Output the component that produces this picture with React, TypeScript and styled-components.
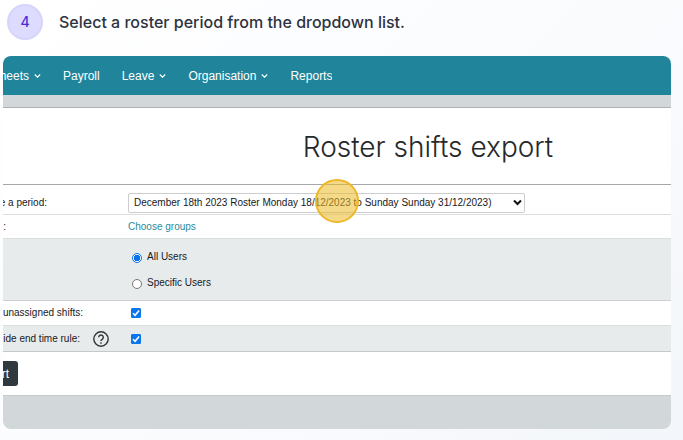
import React, { useState } from "react";
import styled, { createGlobalStyle } from "styled-components";

const Global = createGlobalStyle`
  * { box-sizing: border-box; }
  html { min-height: 100%; background: linear-gradient(135deg, #ffffff 0%, #fbfcfe 50%, #f3f6fa 100%); }
  body { margin: 0; font-family: "Liberation Sans", Arial, sans-serif; color: #17191c; }
`;

const Page = styled.main`
  padding: 4px 12px 11px 3px;
`;

const StepHeader = styled.header`
  display: flex;
  align-items: center;
  gap: 16px;
  height: 36px;
  margin: 0 0 16px 4px;
`;

const StepNumber = styled.span`
  display: grid;
  place-items: center;
  flex: none;
  width: 36px;
  height: 36px;
  border: 2px solid #d6d4fb;
  border-radius: 50%;
  background: #dddcfe;
  color: #4b2bd8;
  font: 500 14px/20px Inter, sans-serif;
`;

const StepTitle = styled.h1`
  margin: 0;
  color: #2d3340;
  font: 500 16px/24px Inter, sans-serif;
  white-space: nowrap;
`;

const Card = styled.section`
  overflow: hidden;
  border-radius: 8px;
  background: #ffffff;
`;

const Nav = styled.nav`
  display: flex;
  align-items: center;
  gap: 22px;
  height: 39px;
  background: #20859b;
`;

const NavLink = styled.a<{ $clipped?: boolean }>`
  display: flex;
  align-items: center;
  justify-content: flex-end;
  flex: none;
  gap: 5px;
  width: ${(p) => (p.$clipped ? "38px" : "auto")};
  overflow: hidden;
  color: #ffffff;
  font-size: 12px;
  line-height: 16px;
  text-decoration: none;
  white-space: nowrap;
  & > svg { flex: none; }
`;

const Strip = styled.div`
  height: 13px;
  border-bottom: 1px solid #adb1b3;
  background: #d2d8da;
`;

const Title = styled.h2`
  margin: 0;
  padding: 21px 0 19px 182px;
  border-bottom: 1px solid #a5a8aa;
  color: #26292c;
  font: 300 28px/36px Inter, sans-serif;
  text-align: center;
  white-space: nowrap;
`;

const Row = styled.div<{ $height: number; $shaded?: boolean; $line?: string }>`
  display: grid;
  grid-template-columns: 125px 1fr;
  align-items: center;
  height: ${(p) => p.$height}px;
  border-bottom: 1px solid ${(p) => p.$line ?? "#dcdfe0"};
  background: ${(p) => (p.$shaded ? "#e7ebec" : "#ffffff")};
  font-size: 10px;
  line-height: 16px;
`;

const LabelCell = styled.div<{ $low?: boolean }>`
  display: flex;
  align-items: center;
  gap: 13px;
  padding-top: ${(p) => (p.$low ? "6px" : "0")};
`;

const Label = styled.label<{ $visible: number }>`
  display: flex;
  justify-content: flex-end;
  width: ${(p) => p.$visible}px;
  overflow: hidden;
  white-space: nowrap;
`;

const HelpButton = styled.button`
  display: grid;
  padding: 0;
  border: 0;
  background: none;
  color: #303539;
`;

const SelectBox = styled.div`
  position: relative;
  display: flex;
  align-items: center;
  width: 397px;
  max-width: 100%;
  margin-top: 6px;
`;

const Select = styled.select`
  appearance: none;
  width: 100%;
  height: 20px;
  padding: 0 16px 0 5px;
  border: 1px solid #cbcdce;
  border-radius: 2px;
  background: #ffffff;
  color: #17191c;
  font: 10px/16px "Liberation Sans", Arial, sans-serif;
`;

const SelectArrow = styled.svg`
  position: absolute;
  right: 3px;
  pointer-events: none;
`;

const ClickMarker = styled.span`
  position: absolute;
  left: 187px;
  top: -14px;
  width: 44px;
  height: 44px;
  border: 2px solid #edb728;
  border-radius: 50%;
  background: rgba(235, 185, 40, 0.55);
  pointer-events: none;
`;

const GroupLink = styled.a`
  color: #2a8a9b;
  font-size: 10px;
  text-decoration: none;
`;

const Options = styled.div`
  display: grid;
  gap: 10px;
`;

const Option = styled.label`
  display: flex;
  align-items: center;
  gap: 5px;
  padding-left: 4px;
`;

const Radio = styled.input`
  appearance: none;
  width: 10px;
  height: 10px;
  margin: 2px 0 0;
  border: 1px solid #767676;
  border-radius: 50%;
  background: #ffffff;
  &:checked {
    border-color: #0b72ec;
    background: radial-gradient(circle, #0b72ec 0 3px, #ffffff 3px);
  }
`;

const CheckControl = styled.span`
  position: relative;
  display: flex;
  width: 10px;
  margin-left: 3px;
`;

const Checkbox = styled.input`
  appearance: none;
  width: 10px;
  height: 10px;
  margin: 0;
  border: 1px solid #767676;
  border-radius: 1px;
  background: #ffffff;
  &:checked { border-color: #0b75f0; background: #0b75f0; }
  &:not(:checked) + svg { display: none; }
`;

const CheckMark = styled.svg`
  position: absolute;
  inset: 0;
  pointer-events: none;
`;

const Actions = styled.div`
  padding: 9px 0 9px;
  border-bottom: 1px solid #c5c9cb;
`;

const ExportButton = styled.button`
  display: flex;
  align-items: center;
  justify-content: flex-end;
  width: 15px;
  height: 25px;
  padding: 0 9px 0 0;
  border: 0;
  border-radius: 0 3px 3px 0;
  overflow: hidden;
  background: #30393d;
  color: #ffffff;
  font: 12px/16px "Liberation Sans", Arial, sans-serif;
`;

const CardFoot = styled.div`
  height: 33px;
  background: #d2d8da;
`;

const Chevron = () => (
  <svg width="7" height="6" viewBox="0 0 7 6" fill="none" stroke="currentColor" strokeWidth="1.1" aria-hidden="true">
    <path d="M.8 1.5 3.5 4.2 6.2 1.5" />
  </svg>
);

function CheckField({ id, label }: { id: string; label: string }) {
  const [on, setOn] = useState(true);
  return (
    <CheckControl>
      <Checkbox id={id} type="checkbox" aria-label={label} checked={on} onChange={() => setOn(!on)} />
      <CheckMark width="10" height="10" viewBox="0 0 10 10" fill="none" stroke="#fff" strokeWidth="1.6" aria-hidden="true">
        <path d="M2 5.2 4.1 7.3 8.1 2.4" />
      </CheckMark>
    </CheckControl>
  );
}

export default function App() {
  const [users, setUsers] = useState("all");
  return (
    <Page>
      <Global />
      <StepHeader>
        <StepNumber>4</StepNumber>
        <StepTitle>Select a roster period from the dropdown list.</StepTitle>
      </StepHeader>
      <Card>
        <Nav>
          <NavLink href="#sheets" $clipped>heets<Chevron /></NavLink>
          <NavLink href="#payroll">Payroll</NavLink>
          <NavLink href="#leave">Leave<Chevron /></NavLink>
          <NavLink href="#organisation">Organisation<Chevron /></NavLink>
          <NavLink href="#reports">Reports</NavLink>
        </Nav>
        <Strip />
        <Title>Roster shifts export</Title>
        <Row $height={30}>
          <LabelCell $low><Label htmlFor="period" $visible={44}>e a period:</Label></LabelCell>
          <SelectBox>
            <Select id="period">
              <option>December 18th 2023 Roster Monday 18/12/2023 to Sunday Sunday 31/12/2023)</option>
            </Select>
            <SelectArrow width="9" height="7" viewBox="0 0 9 7" fill="none" stroke="#111" strokeWidth="2" aria-hidden="true">
              <path d="M1 1.5 4.5 5 8 1.5" />
            </SelectArrow>
            <ClickMarker />
          </SelectBox>
        </Row>
        <Row $height={24}>
          <LabelCell><Label as="span" $visible={3}>:</Label></LabelCell>
          <div><GroupLink href="#groups">Choose groups</GroupLink></div>
        </Row>
        <Row $height={62} $shaded $line="#cdd0d1">
          <span />
          <Options>
            <Option>
              <Radio type="radio" name="users" checked={users === "all"} onChange={() => setUsers("all")} />
              All Users
            </Option>
            <Option>
              <Radio type="radio" name="users" checked={users === "specific"} onChange={() => setUsers("specific")} />
              Specific Users
            </Option>
          </Options>
        </Row>
        <Row $height={25}>
          <LabelCell><Label htmlFor="unassigned" $visible={80}>unassigned shifts:</Label></LabelCell>
          <CheckField id="unassigned" label="unassigned shifts" />
        </Row>
        <Row $height={26} $shaded $line="#c5c9cb">
          <LabelCell>
            <Label htmlFor="endtime" $visible={77}>ide end time rule:</Label>
            <HelpButton type="button" aria-label="Help">
              <svg width="16" height="16" viewBox="0 0 16 16" fill="none" stroke="currentColor" strokeWidth="1.4">
                <circle cx="8" cy="8" r="7.2" />
                <path d="M5.7 6.3a2.3 2.3 0 1 1 3.5 2C8.4 8.8 8 9.2 8 10.1" />
                <path d="M8 11.2v1.5" />
              </svg>
            </HelpButton>
          </LabelCell>
          <CheckField id="endtime" label="ide end time rule" />
        </Row>
        <Actions><ExportButton type="button">rt</ExportButton></Actions>
        <CardFoot />
      </Card>
    </Page>
  );
}
